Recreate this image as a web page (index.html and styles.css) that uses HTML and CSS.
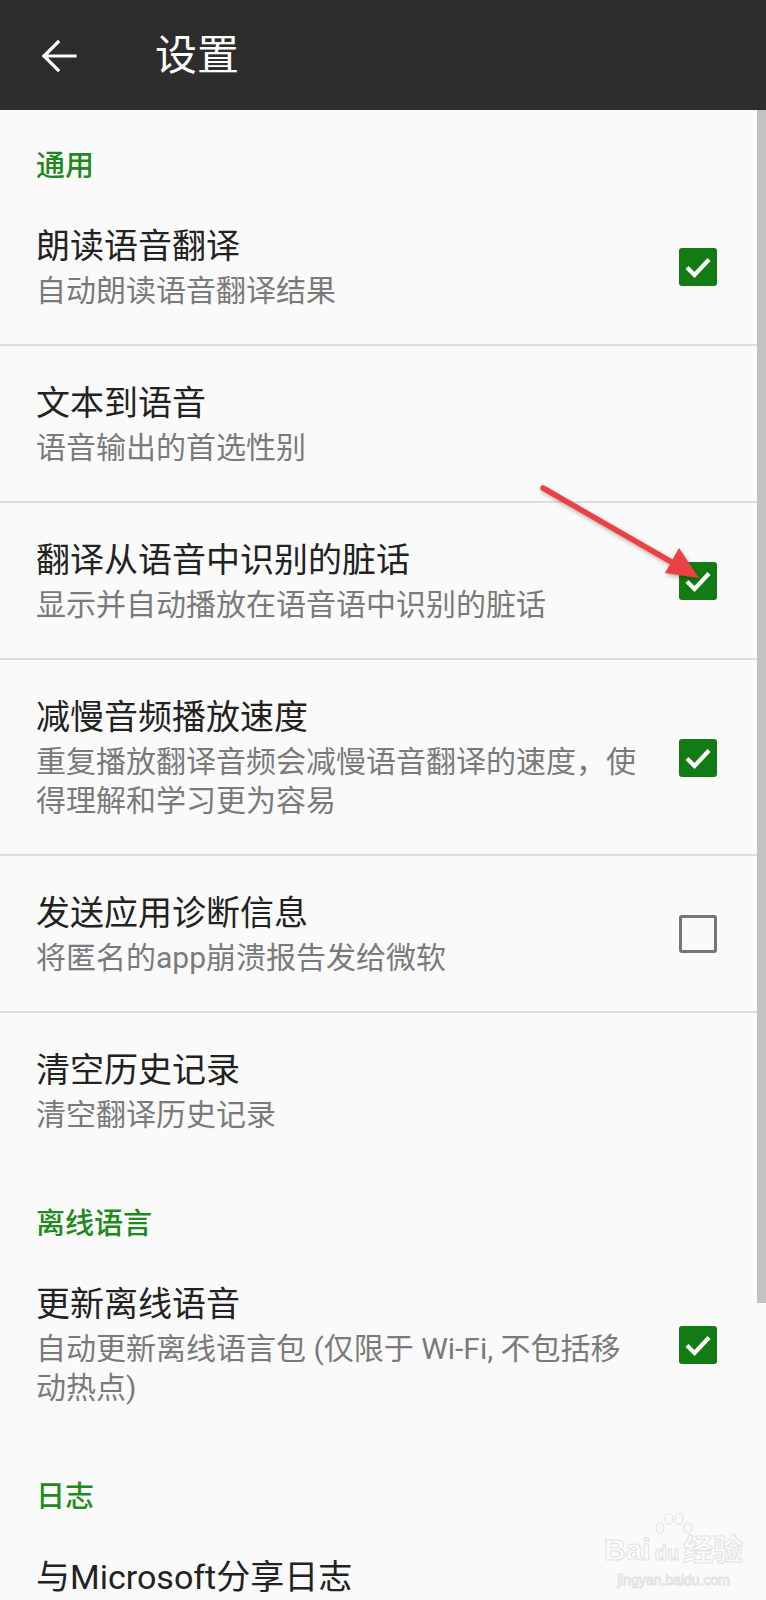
FILE: index.html
```html
<!DOCTYPE html>
<html lang="zh-CN">
<head>
  <meta charset="UTF-8" />
  <meta name="viewport" content="width=device-width, initial-scale=1.0"/>
  <title>设置</title>
  <link rel="stylesheet" href="styles.css">
</head>
<body>
  <div class="app">
    <header class="toolbar">
      <svg class="back" width="36" height="36" viewBox="0 0 36 36">
        <path d="M34 18H3 M17 4L3 18l14 14" fill="none" stroke="#fff" stroke-width="3.2" stroke-linecap="square"/>
      </svg>
      <h1>设置</h1>
    </header>

    <main class="list">
      <div class="section">通用</div>

      <div class="item">
        <div class="text">
          <div class="title">朗读语音翻译</div>
          <div class="sub">自动朗读语音翻译结果</div>
        </div>
        <span class="check on"><svg viewBox="0 0 38 38"><path d="M8 19.5l7.5 7.5L30 11.5" /></svg></span>
      </div>
      <div class="item">
        <div class="text">
          <div class="title">文本到语音</div>
          <div class="sub">语音输出的首选性别</div>
        </div>
      </div>
      <div class="item">
        <div class="text">
          <div class="title">翻译从语音中识别的脏话</div>
          <div class="sub">显示并自动播放在语音语中识别的脏话</div>
        </div>
        <span class="check on"><svg viewBox="0 0 38 38"><path d="M8 19.5l7.5 7.5L30 11.5" /></svg></span>
      </div>
      <div class="item">
        <div class="text">
          <div class="title">减慢音频播放速度</div>
          <div class="sub">重复播放翻译音频会减慢语音翻译的速度，使得理解和学习更为容易</div>
        </div>
        <span class="check on"><svg viewBox="0 0 38 38"><path d="M8 19.5l7.5 7.5L30 11.5" /></svg></span>
      </div>
      <div class="item">
        <div class="text">
          <div class="title">发送应用诊断信息</div>
          <div class="sub">将匿名的app崩溃报告发给微软</div>
        </div>
        <span class="check"></span>
      </div>
      <div class="item last">
        <div class="text">
          <div class="title">清空历史记录</div>
          <div class="sub">清空翻译历史记录</div>
        </div>
      </div>

      <div class="section">离线语言</div>

      <div class="item last">
        <div class="text">
          <div class="title">更新离线语音</div>
          <div class="sub">自动更新离线语言包 (仅限于 Wi-Fi, 不包括移动热点)</div>
        </div>
        <span class="check on"><svg viewBox="0 0 38 38"><path d="M8 19.5l7.5 7.5L30 11.5" /></svg></span>
      </div>

      <div class="section">日志</div>

      <div class="item last">
        <div class="text">
          <div class="title">与Microsoft分享日志</div>
        </div>
      </div>
    </main>

    <!-- scrollbar + annotation overlays -->
    <div class="scrollbar"></div>
    <svg class="pointer" width="766" height="1600" viewBox="0 0 766 1600">
      <defs>
        <filter id="sh" x="-20%" y="-20%" width="140%" height="140%">
          <feDropShadow dx="1" dy="2" stdDeviation="2" flood-color="#000" flood-opacity="0.3"/>
        </filter>
      </defs>
      <g filter="url(#sh)">
        <line x1="543" y1="488" x2="675" y2="564" stroke="#ea4242" stroke-width="5.5" stroke-linecap="round"/>
        <polygon points="699,578 665,573 679,548" fill="#ea4242"/>
      </g>
    </svg>
    <div class="watermark">
      <svg class="paw" width="44" height="26" viewBox="0 0 44 26">
        <g fill="none" stroke="#e2e2e2" stroke-width="1.2">
          <ellipse cx="8" cy="16" rx="4" ry="5"/>
          <ellipse cx="17" cy="7" rx="4" ry="5.5"/>
          <ellipse cx="27" cy="7" rx="4" ry="5.5"/>
          <ellipse cx="36" cy="16" rx="4" ry="5"/>
        </g>
      </svg>
      <span class="wm-logo">Bai<b>du</b>经验</span>
      <span class="wm-url">jingyan.baidu.com</span>
    </div>
  </div>
</body>
</html>
```

FILE: styles.css
```css
body {
  margin: 0;
  background-color: #fafafa;
  font-family: Roboto, "Noto Sans CJK SC", sans-serif;
}
.app {
  position: relative;
  width: 766px;
  height: 1600px;
  overflow: hidden;
  background-color: #fafafa;
}

.toolbar {
  height: 110px;
  background-color: #2d2d2d;
  display: flex;
  align-items: center;
  padding-left: 41px;
  box-sizing: border-box;
}
.back {
  display: block;
  margin-top: 2px;
}
.toolbar h1 {
  margin: 0 0 0 78px;
  color: #fff;
  font-size: 42px;
  font-weight: 400;
  line-height: 50px;
  margin-top: 2px;
}

.section {
  padding: 36px 36px 3px;
  font-size: 29px;
  line-height: 40px;
  color: #1e8a1e;
  font-weight: 500;
}

.item {
  display: flex;
  align-items: center;
  gap: 38px;
  padding: 35px 49px 34px 36px;
  border-bottom: 2px solid #dedede;
}
.item.last {
  border-bottom: none;
}
.text {
  flex: 1;
}
.title {
  font-size: 34px;
  line-height: 44px;
  color: #222;
}
.sub {
  margin-top: 3px;
  font-size: 30px;
  line-height: 39px;
  color: #7a7a7a;
}

.check {
  width: 38px;
  height: 38px;
  box-sizing: border-box;
  border: 3px solid #767676;
  border-radius: 3px;
  flex-shrink: 0;
}
.check.on {
  border: none;
  background-color: #137b13;
}
.check svg {
  display: block;
  width: 38px;
  height: 38px;
}
.check path {
  fill: none;
  stroke: #fff;
  stroke-width: 4.2;
}

.scrollbar {
  position: absolute;
  top: 110px;
  right: 0;
  width: 9px;
  height: 1193px;
  background-color: #c2c2c2;
}
.pointer {
  position: absolute;
  top: 0;
  left: 0;
  pointer-events: none;
}

.watermark {
  position: absolute;
  left: 604px;
  top: 1512px;
  display: flex;
  flex-direction: column;
  align-items: center;
  color: #fcfcfc;
  -webkit-text-stroke: 1px #e2e2e2;
  font-family: "Liberation Sans", "Noto Sans CJK SC", sans-serif;
}
.paw {
  display: block;
  margin-bottom: -6px;
}
.wm-logo {
  font-size: 30px;
  font-weight: 700;
  line-height: 36px;
}
.wm-logo b {
  font-size: 20px;
  margin: 0 4px;
}
.wm-url {
  font-size: 14px;
  line-height: 18px;
}
```
